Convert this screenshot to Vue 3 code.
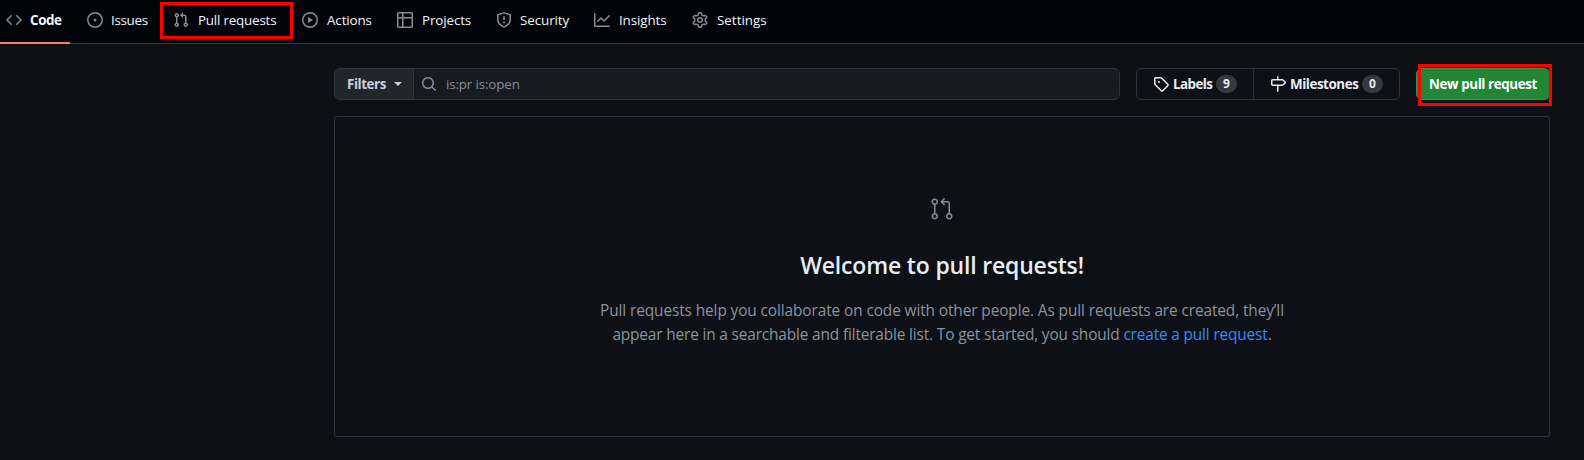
<script setup>
const tabs = [
  { name: 'Code', id: 'code', width: 33, active: true, paths: ['M4.72 3.22a.75.75 0 0 1 1.06 1.06L2.06 8l3.72 3.72a.75.75 0 1 1-1.06 1.06L.47 8.53a.75.75 0 0 1 0-1.06l4.25-4.25Zm6.56 0a.75.75 0 1 0-1.06 1.06L13.94 8l-3.72 3.72a.75.75 0 1 0 1.06 1.06l4.25-4.25a.75.75 0 0 0 0-1.06l-4.25-4.25Z'] },
  { name: 'Issues', id: 'issues', width: 38, paths: ['M8 9.5a1.5 1.5 0 1 0 0-3 1.5 1.5 0 0 0 0 3Z', 'M8 0a8 8 0 1 1 0 16A8 8 0 0 1 8 0ZM1.5 8a6.5 6.5 0 1 0 13 0 6.5 6.5 0 0 0-13 0Z'] },
  { name: 'Pull requests', id: 'pulls', width: 81, marked: true, paths: ['M7.177 3.073 9.573.677A.25.25 0 0 1 10 .854v4.792a.25.25 0 0 1-.427.177L7.177 3.427a.25.25 0 0 1 0-.354ZM3.75 2.5a.75.75 0 1 0 0 1.5.75.75 0 0 0 0-1.5Zm-2.25.75a2.25 2.25 0 1 1 3 2.122v5.256a2.251 2.251 0 1 1-1.5 0V5.372A2.25 2.25 0 0 1 1.5 3.25ZM11 2.5h-1V4h1a1 1 0 0 1 1 1v5.628a2.251 2.251 0 1 0 1.5 0V5A2.5 2.5 0 0 0 11 2.5Zm1 10.25a.75.75 0 1 1 1.5 0 .75.75 0 0 1-1.5 0ZM3.75 12a.75.75 0 1 0 0 1.5.75.75 0 0 0 0-1.5Z'] },
  { name: 'Actions', id: 'actions', width: 47, paths: ['M1.5 8a6.5 6.5 0 1 1 13 0 6.5 6.5 0 0 1-13 0ZM8 0a8 8 0 1 0 0 16A8 8 0 0 0 8 0ZM6.379 5.227A.25.25 0 0 0 6 5.442v5.117a.25.25 0 0 0 .379.214l4.264-2.559a.25.25 0 0 0 0-.428L6.379 5.227Z'] },
  { name: 'Projects', id: 'projects', width: 51, paths: ['M0 1.75C0 .784.784 0 1.75 0h12.5C15.216 0 16 .784 16 1.75v12.5A1.75 1.75 0 0 1 14.25 16H1.75A1.75 1.75 0 0 1 0 14.25V1.75ZM1.5 6.5v7.75c0 .138.112.25.25.25H5v-8H1.5ZM5 5V1.5H1.75a.25.25 0 0 0-.25.25V5H5Zm1.5 1.5v8h7.75a.25.25 0 0 0 .25-.25V6.5h-8Zm8-1.5V1.75a.25.25 0 0 0-.25-.25H6.5V5h8Z'] },
  { name: 'Security', id: 'security', width: 50, paths: ['M7.467.133a1.75 1.75 0 0 1 1.066 0l5.25 1.68A1.75 1.75 0 0 1 15 3.48V7c0 1.566-.32 3.182-1.303 4.682-.983 1.498-2.585 2.813-5.032 3.855a1.7 1.7 0 0 1-1.33 0c-2.447-1.042-4.049-2.357-5.032-3.855C1.32 10.182 1 8.566 1 7V3.48a1.75 1.75 0 0 1 1.217-1.667Zm.61 1.429a.25.25 0 0 0-.153 0l-5.25 1.68a.25.25 0 0 0-.174.238V7c0 1.358.275 2.666 1.057 3.86.784 1.194 2.121 2.34 4.366 3.297a.2.2 0 0 0 .154 0c2.245-.956 3.582-2.104 4.366-3.298C13.225 9.666 13.5 8.36 13.5 7V3.48a.25.25 0 0 0-.174-.237ZM8.75 4.75v3a.75.75 0 0 1-1.5 0v-3a.75.75 0 0 1 1.5 0ZM9 10.5a1 1 0 1 1-2 0 1 1 0 0 1 2 0Z'] },
  { name: 'Insights', id: 'insights', width: 50, paths: ['M1.5 1.75a.75.75 0 0 0-1.5 0v12.5c0 .414.336.75.75.75h14.5a.75.75 0 0 0 0-1.5H1.5V1.75Zm14.28 2.53a.75.75 0 0 0-1.06-1.06L10 7.94 7.53 5.47a.75.75 0 0 0-1.06 0L3.22 8.72a.75.75 0 1 0 1.06 1.06L7 7.06l2.47 2.47a.75.75 0 0 0 1.06 0l5.25-5.25Z'] },
  { name: 'Settings', id: 'settings', width: 50, paths: ['M8 0a8.2 8.2 0 0 1 .701.031C9.444.095 9.99.645 10.16 1.29l.288 1.107c.018.066.079.158.212.224.231.114.454.243.668.386.123.082.233.09.299.071l1.103-.303c.644-.176 1.392.021 1.82.63.27.385.506.792.704 1.218.315.675.111 1.422-.364 1.891l-.814.806c-.049.048-.098.147-.088.294.016.257.016.515 0 .772-.01.147.038.246.088.294l.814.806c.475.469.679 1.216.364 1.891a8 8 0 0 1-.704 1.217c-.428.61-1.176.807-1.82.63l-1.102-.302c-.067-.019-.177-.011-.3.071a6 6 0 0 1-.668.386c-.133.066-.194.158-.211.224l-.29 1.106c-.168.646-.715 1.196-1.458 1.26a8 8 0 0 1-1.402 0c-.743-.064-1.289-.614-1.458-1.26l-.289-1.106c-.018-.066-.079-.158-.212-.224a6 6 0 0 1-.668-.386c-.123-.082-.233-.09-.299-.071l-1.103.303c-.644.176-1.392-.021-1.82-.63a8 8 0 0 1-.704-1.218c-.315-.675-.111-1.422.363-1.891l.815-.806c.05-.048.098-.147.088-.294a6 6 0 0 1 0-.772c.01-.147-.038-.246-.088-.294l-.815-.806C.635 6.045.431 5.298.746 4.623a8 8 0 0 1 .704-1.217c.428-.61 1.176-.807 1.82-.63l1.102.302c.067.019.177.011.3-.071.214-.143.437-.272.668-.386.133-.066.194-.158.211-.224l.29-1.106C6.009.645 6.556.095 7.299.03 7.53.01 7.764 0 8 0Zm-.571 1.525c-.036.003-.108.036-.137.146l-.289 1.105c-.147.561-.549.967-.998 1.189-.173.086-.34.183-.5.29-.417.278-.97.423-1.529.27l-1.103-.303c-.109-.03-.175.016-.195.045-.22.312-.412.644-.573.99-.014.031-.021.11.059.19l.815.806c.411.406.562.957.53 1.456a4.7 4.7 0 0 0 0 .582c.032.499-.119 1.05-.53 1.456l-.815.806c-.081.08-.073.159-.059.19.162.346.353.677.573.989.02.03.085.076.195.046l1.102-.303c.56-.153 1.113-.008 1.53.27.161.107.328.204.501.29.447.222.85.629.997 1.189l.289 1.105c.029.109.101.143.137.146a6.6 6.6 0 0 0 1.142 0c.036-.003.108-.036.137-.146l.289-1.105c.147-.561.549-.967.998-1.189.173-.086.34-.183.5-.29.417-.278.97-.423 1.529-.27l1.103.303c.109.029.175-.016.195-.045.22-.313.411-.644.573-.99.014-.031.021-.11-.059-.19l-.815-.806c-.411-.406-.562-.957-.53-1.456a4.7 4.7 0 0 0 0-.582c-.032-.499.119-1.05.53-1.456l.815-.806c.081-.08.073-.159.059-.19a6.5 6.5 0 0 0-.573-.989c-.02-.03-.085-.076-.195-.046l-1.102.303c-.56.153-1.113.008-1.53-.27a4.4 4.4 0 0 0-.501-.29c-.447-.222-.85-.629-.997-1.189l-.289-1.105c-.029-.11-.101-.143-.137-.146a6.6 6.6 0 0 0-1.142 0ZM11 8a3 3 0 1 1-6 0 3 3 0 0 1 6 0ZM9.5 8a1.5 1.5 0 1 0-3.001.001A1.5 1.5 0 0 0 9.5 8Z'] },
]
</script>

<template>
  <div class="page">
    <nav class="tabs">
      <a v-for="tab in tabs" :key="tab.id" :class="['tab', tab.id, { active: tab.active }]">
        <svg class="icon" viewBox="0 0 16 16"><path v-for="p in tab.paths" :key="p" :d="p" /></svg>
        <span class="tab-name" :style="{ width: tab.width + 'px' }">{{ tab.name }}</span>
        <span v-if="tab.marked" class="marker"></span>
      </a>
    </nav>
    <main class="content">
      <div class="toolbar">
        <div class="search">
          <button class="filters">Filters<i class="caret"></i></button>
          <div class="query">
            <svg class="icon" viewBox="0 0 16 16"><path d="M10.68 11.74a6 6 0 0 1-7.922-8.982 6 6 0 0 1 8.982 7.922l3.04 3.04a.749.749 0 0 1-1.06 1.06ZM11.5 7a4.5 4.5 0 1 0-9 0 4.5 4.5 0 0 0 9 0Z" /></svg>
            <span>is:pr is:open</span>
          </div>
        </div>
        <div class="group">
          <a class="group-item labels">
            <svg class="icon" viewBox="0 0 16 16"><path d="M1 7.775V2.75C1 1.784 1.784 1 2.75 1h5.025c.464 0 .91.184 1.238.513l6.25 6.25a1.75 1.75 0 0 1 0 2.474l-5.026 5.026a1.75 1.75 0 0 1-2.474 0l-6.25-6.25A1.75 1.75 0 0 1 1 7.775Zm1.5 0c0 .066.026.13.073.177l6.25 6.25a.25.25 0 0 0 .354 0l5.025-5.025a.25.25 0 0 0 0-.354l-6.25-6.25a.25.25 0 0 0-.177-.073H2.75a.25.25 0 0 0-.25.25ZM6 5a1 1 0 1 1 0 2 1 1 0 0 1 0-2Z" /></svg>
            <span class="group-name">Labels</span><span class="count">9</span>
          </a>
          <a class="group-item milestones">
            <svg class="icon" viewBox="0 0 16 16"><path d="M7.75 0a.75.75 0 0 1 .75.75V3h3.634c.414 0 .814.147 1.13.414l2.07 1.75a1.75 1.75 0 0 1 0 2.672l-2.07 1.75a1.75 1.75 0 0 1-1.13.414H8.5v5.25a.75.75 0 0 1-1.5 0V10H2.75A1.75 1.75 0 0 1 1 8.25v-3.5C1 3.784 1.784 3 2.75 3H7V.75A.75.75 0 0 1 7.75 0Zm4.384 8.5a.25.25 0 0 0 .161-.06l2.07-1.75a.248.248 0 0 0 0-.38l-2.07-1.75a.25.25 0 0 0-.161-.06H2.75a.25.25 0 0 0-.25.25v3.5c0 .138.112.25.25.25h9.384Z" /></svg>
            <span class="group-name">Milestones</span><span class="count">0</span>
          </a>
        </div>
        <button class="create">New pull request<span class="marker"></span></button>
      </div>
      <section class="blank">
        <svg class="hero" viewBox="0 0 24 24"><path d="M4.75 3a1.75 1.75 0 1 0 0 3.5 1.75 1.75 0 0 0 0-3.5ZM1.5 4.75a3.25 3.25 0 1 1 4 3.163v8.174a3.251 3.251 0 1 1-1.5 0V7.913A3.25 3.25 0 0 1 1.5 4.75Zm3.25 12.75a1.75 1.75 0 1 0 0 3.5 1.75 1.75 0 0 0 0-3.5Zm14.5 0a1.75 1.75 0 1 0 0 3.5 1.75 1.75 0 0 0 0-3.5ZM16 19.25a3.252 3.252 0 1 1 4 3.163 3.252 3.252 0 0 1-4-3.163Z M14.78 1.22a.75.75 0 0 1 0 1.06L13.06 4h4.69A2.25 2.25 0 0 1 20 6.25v9.837h-1.5V6.25a.75.75 0 0 0-.75-.75h-4.69l1.72 1.72a.75.75 0 0 1-1.06 1.06l-3-3a.75.75 0 0 1 0-1.06l3-3a.75.75 0 0 1 1.06 0Z" /></svg>
        <h3>Welcome to pull requests!</h3>
        <p><span class="line one">Pull requests help you collaborate on code with other people. As pull requests are created, they’ll</span>
          <span class="line two">appear here in a searchable and filterable list. To get started, you should <a>create a pull request</a>.</span></p>
      </section>
    </main>
  </div>
</template>

<style>
body { margin: 0; background: #0d1117; }
</style>

<style scoped>
* { box-sizing: border-box; }
.page { height: 460px; overflow: hidden; background: #0d1117; color: #e6edf3; font: 13.4px/20px "Segoe UI", "Open Sans", "Noto Sans", sans-serif; }
.icon { display: block; width: 16px; height: 16px; flex: none; fill: currentColor; }
.tabs { display: flex; height: 44px; padding-left: 6px; gap: 24px; background: #010409; border-bottom: 1px solid #30363d; }
.tab { position: relative; display: flex; gap: 8px; height: 40px; align-items: center; color: #f0f6fc; }
.tab .icon { color: #848d97; }
.tab-name { white-space: nowrap; letter-spacing: -.12px; padding-left: 1px; }
.issues .tab-name { letter-spacing: -.3px; padding-left: 0; }
.pulls .tab-name { letter-spacing: -.2px; }
.security .tab-name { letter-spacing: -.08px; padding-left: 0; }
.settings .tab-name { letter-spacing: 0; }
.active .tab-name { font-weight: 700; letter-spacing: -.4px; padding-left: 0; }
.active::after { content: ""; position: absolute; left: -6px; right: -7px; top: 42px; height: 2px; background: #f78166; }
.marker { position: absolute; border: 3px solid #f00; pointer-events: none; }
.tab .marker { left: -13px; top: 2px; width: 133px; height: 37px; }
.content { width: 1216px; margin: 24px 0 0 334px; }
.toolbar { display: flex; gap: 16px; height: 32px; }
button { font: inherit; margin: 0; }
.search { display: flex; width: 786px; border: 1px solid #30363d; border-radius: 6px; overflow: hidden; background: #161b22; }
.filters { display: flex; align-items: center; width: 79px; padding: 0 0 0 12px; border: 0; border-right: 1px solid #30363d; background: #21262d; color: #c9d1d9; font-weight: 700; letter-spacing: -.45px; }
.caret { margin-left: 8px; border: 4px solid transparent; border-top-color: currentColor; border-bottom: 0; }
.query { display: flex; align-items: center; gap: 9px; padding-left: 7px; color: #848d97; letter-spacing: -.15px; }
.group { display: flex; width: 264px; border: 1px solid #30363d; border-radius: 6px; }
.group-item { display: flex; align-items: center; font-weight: 700; color: #e6edf3; padding-left: 16px; }
.group-item .icon { margin-right: 4px; }
.labels { width: 117px; border-right: 1px solid #30363d; }
.group-name { white-space: nowrap; letter-spacing: -.55px; width: 39px; }
.milestones .group-name { width: 68px; letter-spacing: -.45px; }
.count { margin-left: 4px; width: 21px; height: 18px; border-radius: 9px; background: #343941; font-size: 12px; line-height: 18px; text-align: center; }
.create { position: relative; width: 134px; padding: 0; border: 1px solid #38914a; border-radius: 6px; background: #238636; color: #fff; font-weight: 700; letter-spacing: -.4px; white-space: nowrap; }
.create .marker { left: .5px; top: -4.6px; width: 134px; height: 42px; }
.blank { display: flex; flex-direction: column; align-items: center; height: 321px; margin-top: 16px; padding-top: 80px; border: 1px solid #30363d; border-radius: 3px; text-align: center; }
.hero { width: 24px; height: 24px; fill: #848d97; }
h3 { margin: 26px 0 0; font-size: 23px; line-height: 36px; font-weight: 600; letter-spacing: -.18px; white-space: nowrap; }
p { margin: 16px 0 0; font-size: 15.4px; line-height: 24px; color: #8b949e; }
.line { display: block; white-space: nowrap; }
.one { letter-spacing: -.1px; }
.two { letter-spacing: -.15px; }
.line a { color: #388bfd; }
</style>
